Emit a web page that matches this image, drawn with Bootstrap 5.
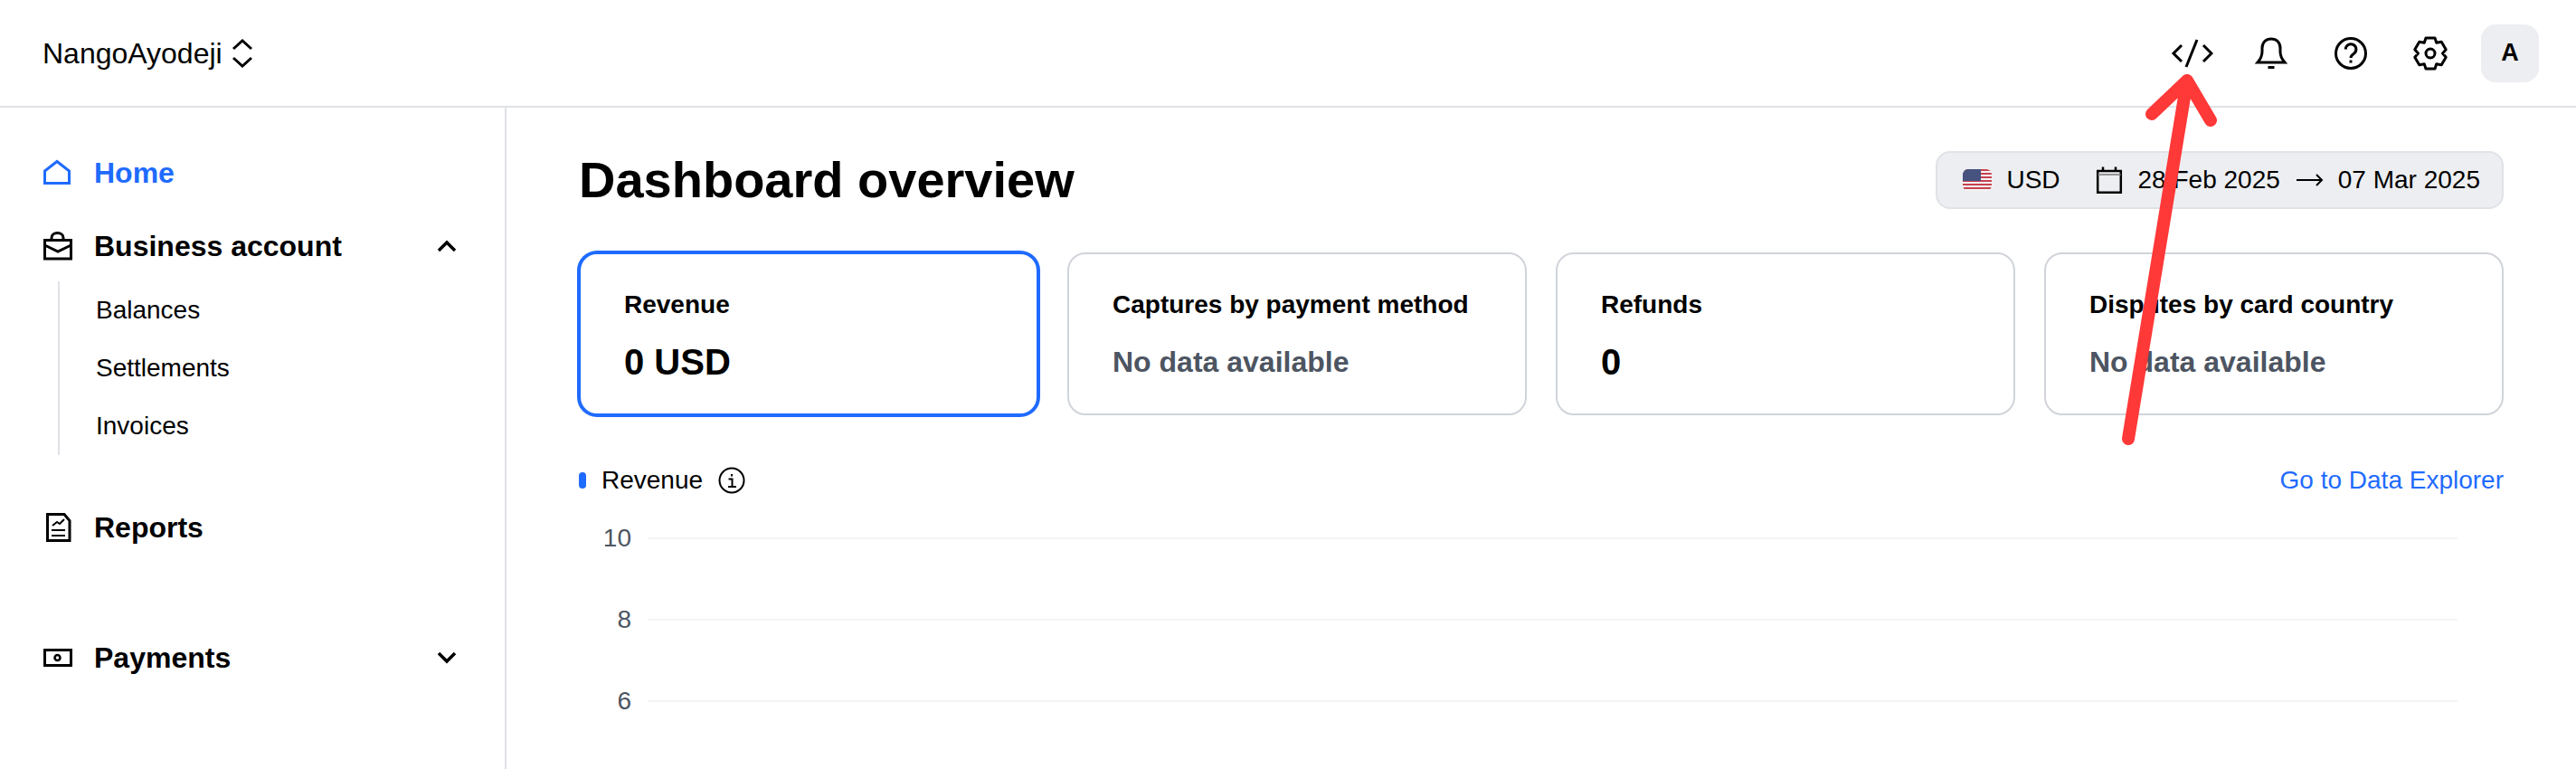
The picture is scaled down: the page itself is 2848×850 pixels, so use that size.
<!DOCTYPE html>
<html lang="en">
<head>
  <meta charset="UTF-8">
  <title>Dashboard overview</title>
  <meta name="viewport" content="width=device-width, initial-scale=1">
  <link rel="stylesheet" href="https://cdn.jsdelivr.net/npm/bootstrap@5.3.0/dist/css/bootstrap.min.css">
  <style>
    html, body { height: 100%; overflow: hidden; }
    body {
      background: #fff;
      color: #000;
      font-family: "Liberation Sans", Arial, sans-serif;
      font-size: 28px;
    }
    svg { display: block; flex: none; }

    /* Top bar */
    .top-bar {
      height: 119px;
      padding: 0 41px 0 47px;
      border-bottom: 2px solid #dfe2e6;
    }
    .org-name { font-size: 32px; }
    .org-switch { margin-left: 6px; }
    .top-actions { gap: 40px; }
    .user-tile {
      width: 64px;
      height: 64px;
      margin-left: -8px;
      border-radius: 16px;
      background: #edeef1;
      font-size: 27px;
      font-weight: 700;
    }

    /* Sidebar */
    .shell { height: 731px; }
    .side-col {
      width: 560px;
      flex: none;
      padding: 48px 52px 0 48px;
      border-right: 2px solid #dfe2e6;
    }
    .side-item {
      height: 48px;
      gap: 24px;
      font-size: 32px;
      font-weight: 700;
      color: #000;
      text-decoration: none;
    }
    .side-item.is-current { color: #1f6bff; }
    .gap-business { margin-top: 33px; }
    .gap-reports { margin-top: 56px; }
    .gap-payments { margin-top: 96px; }
    .side-sub {
      margin: 15px 0 0 16px;
      padding-left: 40px;
      border-left: 2px solid #dfe2e6;
    }
    .side-sub a {
      display: block;
      height: 64px;
      line-height: 64px;
      color: #000;
      text-decoration: none;
    }

    /* Main */
    .main-col { padding: 48px 80px 0 80px; min-width: 0; }
    .page-title { font-size: 56px; font-weight: 700; margin: 0; line-height: 64px; }
    .date-pill {
      height: 64px;
      padding: 0 24px 0 28px;
      background: #edeef1;
      border: 2px solid #dfe2e6;
      border-radius: 16px;
    }
    .usd-code { margin-left: 16px; }
    .range-icon { margin-left: 38px; }
    .stat-row { --bs-gutter-x: 32px; margin-top: 48px; }
    .stat-card {
      height: 180px;
      padding: 3px 48px 0;
      border: 2px solid #d0d4da;
      border-radius: 20px;
      justify-content: center;
    }
    .stat-card.is-active {
      border-color: #1f6bff;
      box-shadow: 0 0 0 2px #1f6bff;
    }
    .stat-label { font-weight: 700; line-height: 40px; }
    .stat-value { font-size: 40px; font-weight: 700; line-height: 48px; margin-top: 19px; }
    .stat-empty { font-size: 32px; font-weight: 700; line-height: 48px; margin-top: 19px; color: #4d5562; }

    .legend-row { height: 40px; margin-top: 52px; }
    .legend-dot { width: 8px; height: 18px; border-radius: 4px; background: #1f6bff; margin-right: 17px; }
    .legend-info { margin-left: 17px; }
    .explorer-link { color: #1f6bff; text-decoration: none; }

    .axis-list { margin-top: -1px; }
    .axis-row { height: 90px; padding-right: 51px; }
    .axis-label { width: 58px; text-align: right; color: #4d5562; line-height: 1; margin-right: 18px; }
    .axis-line { height: 2px; background: #f3f4f6; }

    /* Hand drawn annotation over the page */
    .red-arrow { position: absolute; left: 2340px; top: 60px; z-index: 5; pointer-events: none; }
  </style>
</head>
<body class="position-relative">

  <header class="top-bar d-flex align-items-center justify-content-between">
    <div class="d-flex align-items-center">
      <span class="org-name">NangoAyodeji</span>
      <svg class="org-switch" width="32" height="32" viewBox="0 0 32 32" fill="none" stroke="#000" stroke-width="3"><path d="M6 11 16 2l10 9M6 21l10 9 10-9"/></svg>
    </div>
    <div class="top-actions d-flex align-items-center">
      <svg width="48" height="48" viewBox="-1 0 48 48" fill="none" stroke="#000" stroke-width="3"><path d="M12 15 3 24l9 9M36 15l9 9-9 9M29 9 17 39"/></svg>
      <svg width="48" height="48" viewBox="0 0 48 48" fill="none" stroke="#000" stroke-width="3"><path d="M9 34h30c-3.500-4-5-7-5-12v-4c0-6-4-10-10-10s-10 4-10 10v4c0 5-1.500 8-5 12ZM20.500 39.500h7"/></svg>
      <svg width="48" height="48" viewBox="0 0 48 48" fill="none" stroke="#000" stroke-width="3"><circle cx="24" cy="24" r="16.500"/><path d="M18.300 19.500a5.800 5.800 0 1 1 8.900 4.900c-2 1.300-3.200 2.100-3.200 4.600"/><path d="M24 31.500v3"/></svg>
      <svg width="48" height="48" viewBox="-24 -24 48 48" fill="none" stroke="#000" stroke-width="3" stroke-linejoin="round"><path d="M-5-17H5L6.750-11.700 12.220-12.830 17.220-4.170 13.500 0 17.220 4.170 12.220 12.830 6.750 11.700 5 17H-5L-6.750 11.700-12.220 12.830-17.220 4.170-13.500 0-17.220-4.170-12.220-12.830-6.750-11.700Z"/><circle r="5"/></svg>
      <div class="user-tile d-flex align-items-center justify-content-center">A</div>
    </div>
  </header>

  <div class="shell d-flex">
    <nav class="side-col">
      <a class="side-item is-current d-flex align-items-center" href="#">
        <svg width="32" height="32" viewBox="0 0 32 32" fill="none" stroke="#1f6bff" stroke-width="3"><path d="M1.500 27.500V14L15 3.500 28.500 14v13.500Z"/></svg>
        Home
      </a>
      <a class="side-item gap-business d-flex align-items-center" href="#">
        <svg width="32" height="32" viewBox="0 0 32 32" fill="none" stroke="#000" stroke-width="3"><path d="M1.500 9.500h29v20.500h-29ZM1.500 15 16 22l14.500-7M9 9.500V7c0-3.500 3-5.500 6.500-5.500S22 3.500 22 7v2.500"/></svg>
        Business account
        <svg class="ms-auto" width="24" height="24" viewBox="0 0 24 24" fill="none" stroke="#000" stroke-width="3.500"><path d="M3 17 12 8l9 9"/></svg>
      </a>
      <div class="side-sub">
        <a href="#">Balances</a>
        <a href="#">Settlements</a>
        <a href="#">Invoices</a>
      </div>
      <a class="side-item gap-reports d-flex align-items-center" href="#">
        <svg width="32" height="32" viewBox="0 0 32 32" fill="none" stroke="#000" stroke-width="3"><path d="M4.500 1.500H23l6 7v22H4.500Z"/><path stroke-width="2" d="m10 14 5-4 3 2 5-5M9 19h15M9 25h15"/></svg>
        Reports
      </a>
      <a class="side-item gap-payments d-flex align-items-center" href="#">
        <svg width="32" height="32" viewBox="0 0 32 32" fill="none" stroke="#000" stroke-width="3"><rect x="1.500" y="7.500" width="29" height="17"/><circle cx="15.500" cy="16" r="3" stroke-width="2.500"/></svg>
        Payments
        <svg class="ms-auto" width="24" height="24" viewBox="0 0 24 24" fill="none" stroke="#000" stroke-width="3.500"><path d="m3 7 9 9 9-9"/></svg>
      </a>
    </nav>

    <main class="main-col flex-grow-1">
      <div class="d-flex align-items-center justify-content-between">
        <h1 class="page-title">Dashboard overview</h1>
        <div class="date-pill d-flex align-items-center">
          <svg class="rounded-2" width="32" height="24" viewBox="0 0 32 24">
            <rect width="32" height="24" fill="#f4f4f6"/>
            <path fill="#c8414e" d="M0 0h32v2H0zM0 4h32v2H0zM0 8h32v2H0zM0 12h32v2H0zM0 16h32v2H0zM0 20h32v2H0z"/>
            <rect width="20" height="13" fill="#47537f"/>
          </svg>
          <span class="usd-code">USD</span>
          <svg class="range-icon" width="32" height="32" viewBox="0 0 32 32" fill="none" stroke="#000" stroke-width="2.500"><path d="M3.200 6h25.600v23.800H3.200ZM9 1.500V6M23 1.500V6"/><path stroke="#777" stroke-width="1.500" d="M3.200 10h25.600"/></svg>
          <span class="ms-3">28 Feb 2025</span>
          <svg class="ms-3" width="32" height="32" viewBox="0 0 32 32" fill="none" stroke="#000" stroke-width="2"><path d="M2 16h28M24 10l6 6-6 6"/></svg>
          <span class="ms-3">07 Mar 2025</span>
        </div>
      </div>

      <div class="stat-row row row-cols-4">
        <div class="col"><div class="stat-card is-active card">
          <div class="stat-label">Revenue</div>
          <div class="stat-value">0 USD</div>
        </div></div>
        <div class="col"><div class="stat-card card">
          <div class="stat-label">Captures by payment method</div>
          <div class="stat-empty">No data available</div>
        </div></div>
        <div class="col"><div class="stat-card card">
          <div class="stat-label">Refunds</div>
          <div class="stat-value">0</div>
        </div></div>
        <div class="col"><div class="stat-card card">
          <div class="stat-label">Disputes by card country</div>
          <div class="stat-empty">No data available</div>
        </div></div>
      </div>

      <div class="legend-row d-flex align-items-center">
        <span class="legend-dot"></span>
        <span>Revenue</span>
        <svg class="legend-info" width="30" height="30" viewBox="0 0 30 30" fill="none" stroke="#000" stroke-width="2"><circle cx="15" cy="15" r="13.500"/><path d="M15 8v2.500M11.500 13.500H15.500V21.500M11 22h9"/></svg>
        <a class="explorer-link ms-auto" href="#">Go to Data Explorer</a>
      </div>

      <div class="axis-list">
        <div class="axis-row d-flex align-items-center"><span class="axis-label">10</span><div class="axis-line flex-grow-1"></div></div>
        <div class="axis-row d-flex align-items-center"><span class="axis-label">8</span><div class="axis-line flex-grow-1"></div></div>
        <div class="axis-row d-flex align-items-center"><span class="axis-label">6</span><div class="axis-line flex-grow-1"></div></div>
      </div>
    </main>
  </div>

  <svg class="red-arrow" width="120" height="440" viewBox="0 0 120 440" fill="none" stroke="#ff3838" stroke-width="14" stroke-linecap="round" stroke-linejoin="round"><path d="M39 66 78 29l26 44M78 29 13 425"/></svg>

  <script src="https://cdn.jsdelivr.net/npm/bootstrap@5.3.0/dist/js/bootstrap.bundle.min.js"></script>
</body>
</html>
